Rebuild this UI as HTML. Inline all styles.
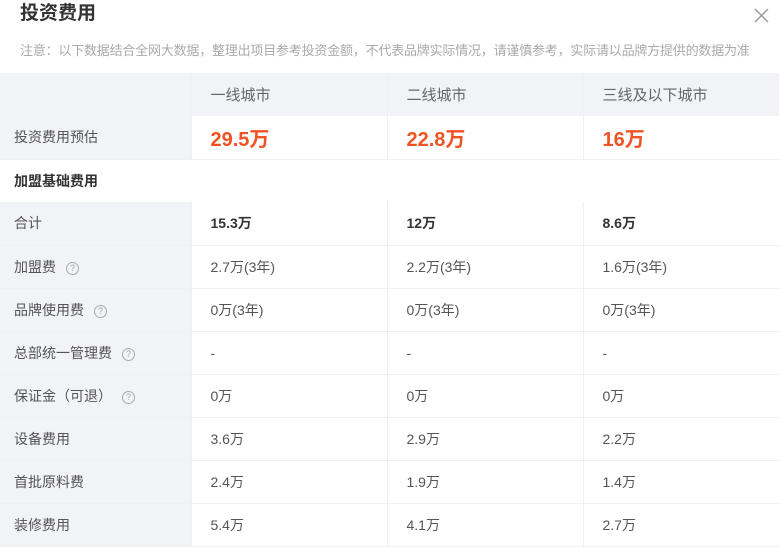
<!DOCTYPE html>
<html><head><meta charset="utf-8"><style>
body{margin:0;width:781px;height:541px;overflow:hidden;background:#fff;font-family:"Liberation Sans","Noto Sans CJK SC",sans-serif;color:#333;position:relative}
.t{position:absolute;left:20px;top:2px;font-size:19px;font-weight:bold;color:#333;line-height:24px}
.n{position:absolute;left:20px;top:42px;font-size:13px;color:#aaa;line-height:18px;white-space:nowrap;letter-spacing:-0.2px}
.x{position:absolute;left:753px;top:7px}
table{position:absolute;left:0;top:73px;border-collapse:collapse;width:779px}
td{height:43px;padding:0;font-size:14px;color:#555;border-bottom:1px solid #f0f0f3;border-left:1px solid #f0f0f3;box-sizing:border-box;vertical-align:middle}
td:first-child{width:191px;background:#f2f3f7;padding-left:14px;border-left:none;color:#555}
td.c{width:196px;padding-left:19px}
tr.h td{background:#f2f3f7;color:#666;border-bottom:none;font-size:15px}
.big{font-size:20px;font-weight:bold;color:#f05323}
tr.s td{background:#fff;font-weight:bold;color:#333;border:none}
b{color:#333}
.q{display:inline-block;width:11px;height:11px;border:1px solid #aaa;border-radius:50%;font-size:9px;line-height:11px;text-align:center;color:#aaa;margin-left:10px;vertical-align:1px}
</style></head><body>
<div class="t">投资费用</div>
<div class="x"><svg width="17" height="17"><path d="M2 2L15 15M15 2L2 15" stroke="#999" stroke-width="1.5"/></svg></div>
<div class="n">注意：以下数据结合全网大数据，整理出项目参考投资金额，不代表品牌实际情况，请谨慎参考，实际请以品牌方提供的数据为准</div>
<table>
<tr class="h"><td></td><td class="c">一线城市</td><td class="c">二线城市</td><td class="c">三线及以下城市</td></tr>
<tr><td>投资费用预估</td><td class="c big">29.5万</td><td class="c big">22.8万</td><td class="c big">16万</td></tr>
<tr class="s"><td colspan="4" style="background:#fff">加盟基础费用</td></tr>
<tr><td>合计</td><td class="c"><b>15.3万</b></td><td class="c"><b>12万</b></td><td class="c"><b>8.6万</b></td></tr>
<tr><td>加盟费<span class="q">?</span></td><td class="c">2.7万(3年)</td><td class="c">2.2万(3年)</td><td class="c">1.6万(3年)</td></tr>
<tr><td>品牌使用费<span class="q">?</span></td><td class="c">0万(3年)</td><td class="c">0万(3年)</td><td class="c">0万(3年)</td></tr>
<tr><td>总部统一管理费<span class="q">?</span></td><td class="c">-</td><td class="c">-</td><td class="c">-</td></tr>
<tr><td>保证金（可退）<span class="q">?</span></td><td class="c">0万</td><td class="c">0万</td><td class="c">0万</td></tr>
<tr><td>设备费用</td><td class="c">3.6万</td><td class="c">2.9万</td><td class="c">2.2万</td></tr>
<tr><td>首批原料费</td><td class="c">2.4万</td><td class="c">1.9万</td><td class="c">1.4万</td></tr>
<tr><td>装修费用</td><td class="c">5.4万</td><td class="c">4.1万</td><td class="c">2.7万</td></tr>
</table>
</body></html>
